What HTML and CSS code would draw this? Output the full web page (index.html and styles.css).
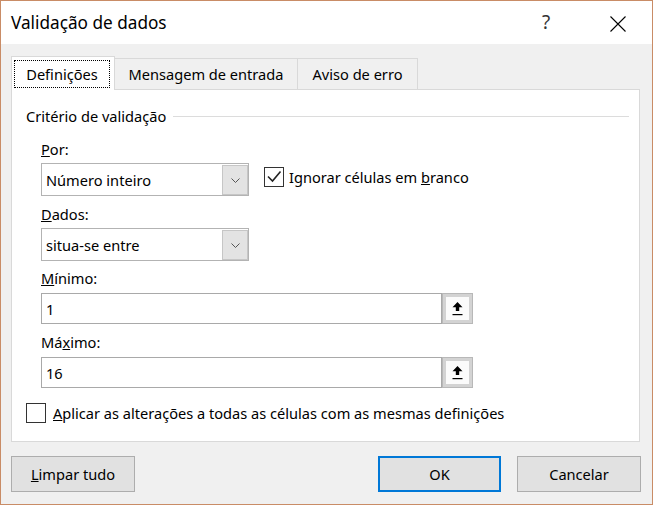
FILE: index.html
```html
<!DOCTYPE html>
<html lang="pt">
<head>
<meta charset="utf-8">
<title>Validação de dados</title>
<link rel="stylesheet" href="styles.css">
</head>
<body>
<div class="window">
  <div class="titlebar">
    <span class="title">Validação de dados</span>
    <span class="help">?</span>
    <span class="close"><svg width="16" height="16" viewBox="0 0 16 16"><path d="M0.5 0.5 L15.5 15.5 M15.5 0.5 L0.5 15.5" stroke="#000" stroke-width="1.1" fill="none"/></svg></span>
  </div>
  <div class="content">
    <div class="tabs">
      <div class="tab active"><span class="focus">Definições</span></div>
      <div class="tab t2">Mensagem de entrada</div>
      <div class="tab t3">Aviso de erro</div>
    </div>
    <div class="panel">
      <div class="group-head"><span>Critério de validação</span><span class="rule"></span></div>
      <div class="fields">
        <div class="lbl l-por"><u>P</u>or:</div>
        <div class="row r-dd1">
          <div class="combo"><span class="combo-text">Número inteiro</span><span class="combo-btn"><svg width="9" height="5" viewBox="0 0 9 5"><path d="M0.5 0.5 L4.5 4.5 L8.5 0.5" stroke="#555" stroke-width="1" fill="none"/></svg></span></div>
          <div class="check"><span class="box"><svg width="18" height="18" viewBox="0 0 18 18"><path d="M3 8.5 L7.5 13 L15.5 3.5" stroke="#222" stroke-width="1.6" fill="none"/></svg></span><span class="check-label">Ignorar células em <u>b</u>ranco</span></div>
        </div>
        <div class="lbl l-dados"><u>D</u>ados:</div>
        <div class="combo c-dd2"><span class="combo-text">situa-se entre</span><span class="combo-btn"><svg width="9" height="5" viewBox="0 0 9 5"><path d="M0.5 0.5 L4.5 4.5 L8.5 0.5" stroke="#555" stroke-width="1" fill="none"/></svg></span></div>
        <div class="lbl l-min"><u>M</u>ínimo:</div>
        <div class="range r-min"><span class="range-field">1</span><span class="range-btn"><svg width="11" height="14" viewBox="0 0 11 14"><path d="M5.5 0 L10.5 5.2 L7.2 5.2 L7.2 9 L3.8 9 L3.8 5.2 L0.5 5.2 Z" fill="#000"/><rect x="0.5" y="12" width="10" height="1.2" fill="#000"/></svg></span></div>
        <div class="lbl l-max">Má<u>x</u>imo:</div>
        <div class="range r-max"><span class="range-field">16</span><span class="range-btn"><svg width="11" height="14" viewBox="0 0 11 14"><path d="M5.5 0 L10.5 5.2 L7.2 5.2 L7.2 9 L3.8 9 L3.8 5.2 L0.5 5.2 Z" fill="#000"/><rect x="0.5" y="12" width="10" height="1.2" fill="#000"/></svg></span></div>
      </div>
      <div class="apply"><span class="box"></span><span class="check-label"><u>A</u>plicar as alterações a todas as células com as mesmas definições</span></div>
    </div>
    <div class="buttons">
      <button class="btn b-clear"><u>L</u>impar tudo</button>
      <button class="btn b-ok">OK</button>
      <button class="btn b-cancel">Cancelar</button>
    </div>
  </div>
</div>
</body>
</html>
```
FILE: styles.css
```css
body {
  margin: 0;
  font-family: "Noto Sans", "Open Sans", sans-serif;
  font-size: 14.6px;
  color: #000;
}
.window {
  width: 653px;
  height: 505px;
  box-sizing: border-box;
  border: 1px solid #c98c66;
  background: #f0f0f0;
  display: flex;
  flex-direction: column;
}
.titlebar {
  height: 43px;
  background: #fff;
  display: flex;
  align-items: center;
  flex-shrink: 0;
}
.title {
  flex: 1;
  padding-left: 10px;
  font-size: 17.2px;
}
.help {
  width: 74px;
  text-align: center;
  font-size: 19px;
  color: #333;
  padding-bottom: 2px;
}
.close {
  width: 69px;
  display: flex;
  justify-content: center;
  padding-top: 2px;
}
.content {
  padding: 12px 0 0 10px;
}
.tabs {
  display: flex;
  align-items: flex-end;
  height: 33px;
}
.tab {
  box-sizing: border-box;
  height: 31px;
  border: 1px solid #d9d9d9;
  border-bottom: 0;
  margin-left: -1px;
  padding-top: 5px;
  line-height: 20px;
  text-align: center;
  background: #f0f0f0;
  white-space: nowrap;
}
.tab.active {
  position: relative;
  z-index: 1;
  margin-left: 0;
  width: 104px;
  height: 34px;
  margin-bottom: -1px;
  background: #fff;
  padding: 3px 0 0 2px;
}
.focus {
  display: block;
  box-sizing: border-box;
  width: 96px;
  height: 28px;
  border: 1px dotted #000;
  padding-top: 3px;
  line-height: 20px;
  text-align: center;
}
.t2 { width: 184px; }
.t3 { width: 121px; }
.panel {
  box-sizing: border-box;
  width: 629px;
  height: 353px;
  border: 1px solid #d9d9d9;
  background: #fff;
}
.group-head {
  display: flex;
  align-items: center;
  margin-top: 16px;
  padding-left: 14px;
  line-height: 20px;
}
.rule {
  flex: 1;
  height: 1px;
  background: #dcdcdc;
  margin: 0 10px 0 7px;
}
.fields {
  display: flex;
  flex-direction: column;
  align-items: flex-start;
  padding-left: 29px;
}
.lbl {
  line-height: 20px;
}
.l-por { margin-top: 13px; }
.r-dd1 { margin-top: 4px; }
.l-dados { margin-top: 8px; }
.c-dd2 { margin-top: 4px; }
.l-min { margin-top: 7px; }
.r-min { margin-top: 5px; }
.l-max { margin-top: 8px; }
.r-max { margin-top: 5px; }
.row {
  display: flex;
  align-items: flex-start;
}
.combo {
  box-sizing: border-box;
  width: 208px;
  height: 33px;
  border: 1px solid #b3b3b3;
  padding: 1px 0 0 0;
  display: flex;
  align-items: stretch;
  background: #fff;
}
.combo-text {
  flex: 1;
  padding-left: 4px;
  line-height: 20px;
  display: flex;
  align-items: center;
}
.combo-btn {
  box-sizing: border-box;
  width: 26px;
  border: 1px solid #c6c6c6;
  background: #e3e3e3;
  display: flex;
  align-items: center;
  justify-content: center;
}
.check {
  display: flex;
  align-items: center;
  margin: 4px 0 0 15px;
}
.box {
  box-sizing: border-box;
  width: 20px;
  height: 20px;
  border: 1px solid #333;
  background: #fff;
  display: flex;
  align-items: center;
  justify-content: center;
  flex-shrink: 0;
}
.check-label {
  margin-left: 5px;
  line-height: 20px;
  white-space: nowrap;
}
.range {
  display: flex;
  width: 432px;
  height: 31px;
}
.range-field {
  box-sizing: border-box;
  flex: 1;
  border: 1px solid #a9a9a9;
  padding-left: 4px;
  line-height: 20px;
  display: flex;
  align-items: center;
}
.range-btn {
  box-sizing: border-box;
  width: 31px;
  border: 1px solid #b8b8b8;
  box-shadow: inset 0 0 0 3px #d3d3d3;
  background: #fbfbfb;
  display: flex;
  align-items: center;
  justify-content: center;
}
.apply {
  display: flex;
  align-items: center;
  margin-top: 15px;
  padding-left: 14px;
}
.apply .check-label {
  margin-left: 7px;
}
.buttons {
  display: flex;
  width: 630px;
  margin-top: 14px;
}
.btn {
  box-sizing: border-box;
  height: 36px;
  border: 1px solid #adadad;
  background: #e1e1e1;
  font-family: "Noto Sans", "Open Sans", sans-serif;
  font-size: 14.6px;
  line-height: 20px;
  color: #000;
  padding: 0;
}
.b-clear { width: 124px; }
.b-ok {
  width: 123px;
  margin-left: auto;
  border: 2px solid #0078d7;
}
.b-cancel {
  width: 124px;
  margin-left: 16px;
}
```
